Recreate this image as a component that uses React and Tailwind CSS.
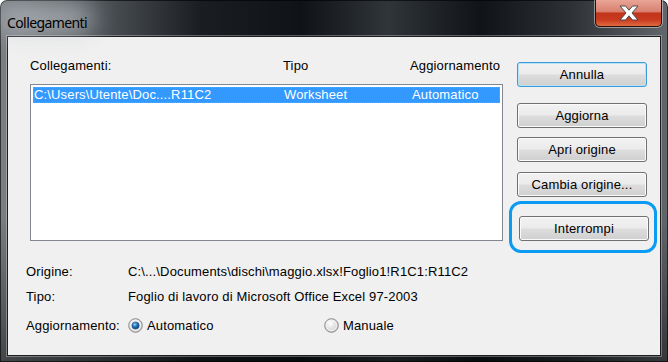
import React from "react";

const font = { fontFamily: '"Liberation Sans", Arial, sans-serif' };

function CloseButton() {
    return (
        <div className="w-[67px] h-[27px] rounded-b-[5px] border border-t-0 border-[#2a0f0a] shadow-[0_0_0_1px_rgba(255,255,255,0.45)] bg-[linear-gradient(to_bottom,#e9a597_0%,#d9806f_45%,#c2351b_50%,#c73a1f_75%,#e06a3e_100%)] flex items-center justify-center">
            <svg width="20" height="16" viewBox="0 0 20 16">
                <path
                    d="M1 1 H6.5 L10 5.2 L13.5 1 H19 L13 8 L19 15 H13.5 L10 10.8 L6.5 15 H1 L7 8 Z"
                    fill="#ffffff"
                    stroke="#4a4a4a"
                    strokeWidth="1"
                    strokeLinejoin="round"
                />
            </svg>
        </div>
    );
}

function Button({ children, primary = false, className = "" }) {
    return (
        <div
            className={`h-[25px] w-[130px] rounded-[3px] border flex items-center justify-center text-[13px] text-black bg-[linear-gradient(to_bottom,#f2f2f2_0%,#ebebeb_48%,#dddddd_52%,#cfcfcf_100%)] ${primary
                ? "border-[#3c9ad8] shadow-[inset_0_0_0_1px_#b8e2f8]"
                : "border-[#707070] shadow-[inset_0_0_0_1px_#fbfbfb]"
                } ${className}`}
        >
            {children}
        </div>
    );
}

function Radio({ checked }) {
    return (
        <svg width="15" height="15" viewBox="0 0 15 15" className="shrink-0">
            <defs>
                <radialGradient id="rOff" cx="40%" cy="35%" r="70%">
                    <stop offset="0%" stopColor="#ffffff" />
                    <stop offset="100%" stopColor="#c9c9c9" />
                </radialGradient>
                <radialGradient id="rOn" cx="40%" cy="35%" r="65%">
                    <stop offset="0%" stopColor="#8fd3ff" />
                    <stop offset="55%" stopColor="#1f6fb8" />
                    <stop offset="100%" stopColor="#0d3f75" />
                </radialGradient>
            </defs>
            <circle cx="7.5" cy="7.5" r="6.8" fill="url(#rOff)" stroke="#8a8a8a" strokeWidth="1" />
            <circle cx="7.5" cy="7.5" r="5" fill="none" stroke="#f4f4f4" strokeWidth="1" />
            {checked ? <circle cx="7.5" cy="7.5" r="3.6" fill="url(#rOn)" stroke="#1b4f86" strokeWidth="0.6" /> : null}
        </svg>
    );
}

export default function App() {
    return (
        <div className="w-[668px] h-[362px] bg-white">
            <div className="w-[668px] h-[362px] rounded-t-[7px] overflow-hidden flex flex-col bg-[linear-gradient(to_bottom,rgba(0,0,0,0)_0%,rgba(0,0,0,0)_60%,rgba(0,0,0,0.45)_100%),linear-gradient(to_right,#7a7f84_0%,#52575c_14%,#1a1d21_30%,#0f1216_45%,#30353a_58%,#101317_72%,#2c3035_85%,#62676c_100%)] shadow-[inset_0_0_0_1px_rgba(0,0,0,0.6)]">
                <div className="h-[36px] flex justify-between pl-[7px] pr-[6px] shrink-0">
                    <div className="relative pt-[10px]">
                        <div className="absolute left-[-10px] top-[4px] w-[96px] h-[30px] rounded-full bg-[#c9ced3]/60 blur-md" />
                        <span
                            className="relative text-[14px] tracking-[-0.6px] leading-[21px] text-black"
                            style={{ fontFamily: '"Noto Sans", "Open Sans", sans-serif' }}
                        >
                            Collegamenti
                        </span>
                    </div>
                    <CloseButton />
                </div>

                <div
                    className="mx-[7px] h-[320px] shrink-0 bg-[#f0f0f0] border border-[#1e1e1e] shadow-[0_0_0_1px_rgba(255,255,255,0.3)] text-[13px] tracking-[0.15px] text-black"
                    style={font}
                >
                    <div className="flex pl-[22px]">
                        <div className="w-[473px] pt-[21px]">
                            <div className="grid grid-cols-[253px_127px_1fr] h-[16px] leading-[16px]">
                                <span>Collegamenti:</span>
                                <span>Tipo</span>
                                <span>Aggiornamento</span>
                            </div>
                            <div className="mt-[10px] h-[157px] border border-[#828790] bg-white p-[2px]">
                                <div className="h-[16px] bg-[#3399ff] border border-dotted border-[#d98b4a] grid grid-cols-[250px_128px_1fr] leading-[14px] text-white">
                                    <span>C:\Users\Utente\Doc....R11C2</span>
                                    <span>Worksheet</span>
                                    <span>Automatico</span>
                                </div>
                            </div>
                        </div>

                        <div className="ml-[14px] w-[132px] flex flex-col">
                            <Button primary className="mt-[25px]">Annulla</Button>
                            <Button className="mt-[16px]">Aggiorna</Button>
                            <Button className="mt-[9px]">Apri origine</Button>
                            <Button className="mt-[10px]">Cambia origine...</Button>
                            <div className="relative mt-[19px] ml-[2px]">
                                <Button>Interrompi</Button>
                                <div className="absolute left-[-10px] top-[-15px] w-[148px] h-[52px] rounded-[12px] border-[3px] border-[#0c9bf2]" />
                            </div>
                        </div>
                    </div>

                    <div className="pl-[18px]">
                        <div className="mt-[23px] grid grid-cols-[102px_1fr] h-[15px] leading-[15px]">
                            <span>Origine:</span>
                            <span>C:\...\Documents\dischi\maggio.xlsx!Foglio1!R1C1:R11C2</span>
                        </div>
                        <div className="mt-[10px] grid grid-cols-[102px_1fr] h-[15px] leading-[15px]">
                            <span>Tipo:</span>
                            <span>Foglio di lavoro di Microsoft Office Excel 97-2003</span>
                        </div>
                        <div className="mt-[14px] grid grid-cols-[102px_1fr] h-[15px] leading-[15px]">
                            <span>Aggiornamento:</span>
                            <div className="flex items-center">
                                <div className="w-[196px] flex items-center gap-[4px]">
                                    <Radio checked />
                                    <span>Automatico</span>
                                </div>
                                <div className="flex items-center gap-[4px]">
                                    <Radio />
                                    <span>Manuale</span>
                                </div>
                            </div>
                        </div>
                    </div>
                </div>
            </div>
        </div>
    );
}
